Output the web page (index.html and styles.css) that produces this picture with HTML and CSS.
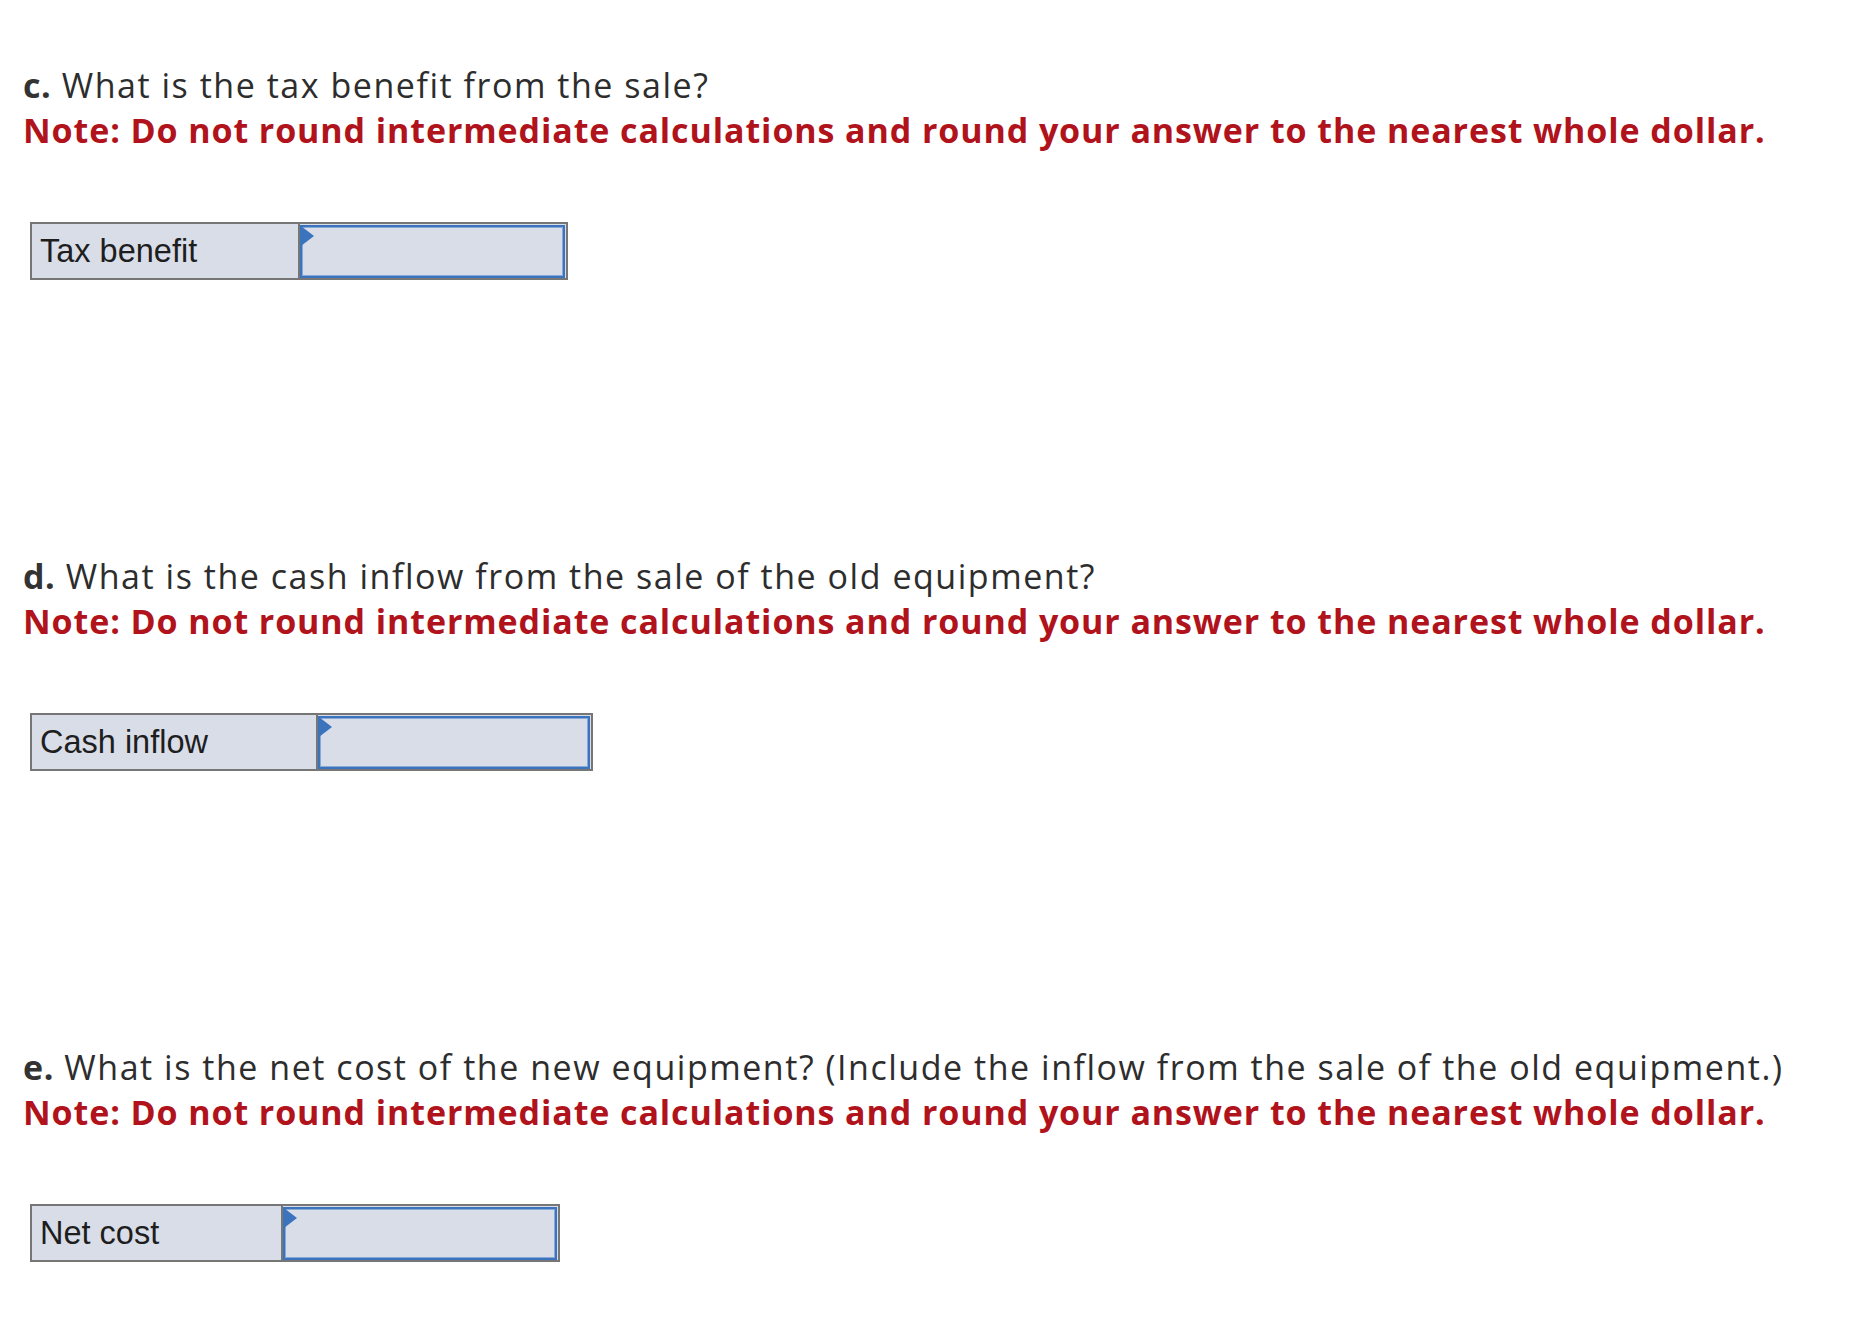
FILE: index.html
```html
<!DOCTYPE html>
<html lang="en">
<head>
<meta charset="utf-8">
<title>Questions</title>
<link rel="stylesheet" href="styles.css">
</head>
<body>
<main class="page">
  <section class="part">
    <p class="question"><b>c.</b> What is the tax benefit from the sale?</p>
    <p class="note">Note: Do not round intermediate calculations and round your answer to the nearest whole dollar.</p>
    <div class="answer">
      <div class="label label-tax">Tax benefit</div>
      <div class="cell cell-tax"><div class="field"><span class="flag"></span></div></div>
    </div>
  </section>
  <section class="part">
    <p class="question"><b>d.</b> What is the cash inflow from the sale of the old equipment?</p>
    <p class="note">Note: Do not round intermediate calculations and round your answer to the nearest whole dollar.</p>
    <div class="answer">
      <div class="label label-cash">Cash inflow</div>
      <div class="cell cell-cash"><div class="field"><span class="flag"></span></div></div>
    </div>
  </section>
  <section class="part">
    <p class="question"><b>e.</b> What is the net cost of the new equipment? (Include the inflow from the sale of the old equipment.)</p>
    <p class="note">Note: Do not round intermediate calculations and round your answer to the nearest whole dollar.</p>
    <div class="answer">
      <div class="label label-net">Net cost</div>
      <div class="cell cell-net"><div class="field"><span class="flag"></span></div></div>
    </div>
  </section>
</main>
</body>
</html>
```
FILE: styles.css
```css
html, body {
  margin: 0;
  padding: 0;
  background: #ffffff;
}

.page {
  padding: 63px 0 0 23px;
  font-family: "Open Sans", "Lato", "Liberation Sans", sans-serif;
}

.part {
  margin-bottom: 274px;
}

.question {
  margin: 0;
  font-size: 34px;
  line-height: 45px;
  letter-spacing: 1.53px;
  color: #2d2d2d;
  white-space: nowrap;
  font-variant-ligatures: none;
}

.question b {
  font-weight: 700;
  letter-spacing: 0.6px;
  color: #333333;
}

.note {
  margin: 0;
  font-size: 34px;
  line-height: 45px;
  letter-spacing: 0.9px;
  font-weight: 700;
  color: #b0131b;
  white-space: nowrap;
  font-variant-ligatures: none;
}

.answer {
  display: inline-flex;
  margin-top: 69px;
  margin-left: 7px;
  height: 54px;
  border: 2px solid #767676;
  background: #d9dde8;
  vertical-align: top;
}

.label {
  display: flex;
  align-items: center;
  padding-left: 8px;
  box-sizing: border-box;
  border-right: 2px solid #767676;
  font-family: "Liberation Sans", Arial, sans-serif;
  font-size: 32.5px;
  color: #1e1e1e;
}

.label-tax { width: 268px; }
.label-cash { width: 286px; }
.label-net { width: 251px; }

.cell {
  padding: 1px 1px 0 0;
  box-sizing: border-box;
  display: flex;
}

.cell-tax { width: 266px; }
.cell-cash { width: 273px; }
.cell-net { width: 275px; }

.field {
  position: relative;
  flex: 1;
  border: 2px solid #3b74bd;
  box-shadow: inset 0 0 0 1px #86a9d9;
  background: #d9dde8;
}

.flag {
  position: absolute;
  left: -1px;
  top: -1px;
  width: 0;
  height: 0;
  border-top: 10px solid transparent;
  border-bottom: 10px solid transparent;
  border-left: 13px solid #3b74bd;
}
```
